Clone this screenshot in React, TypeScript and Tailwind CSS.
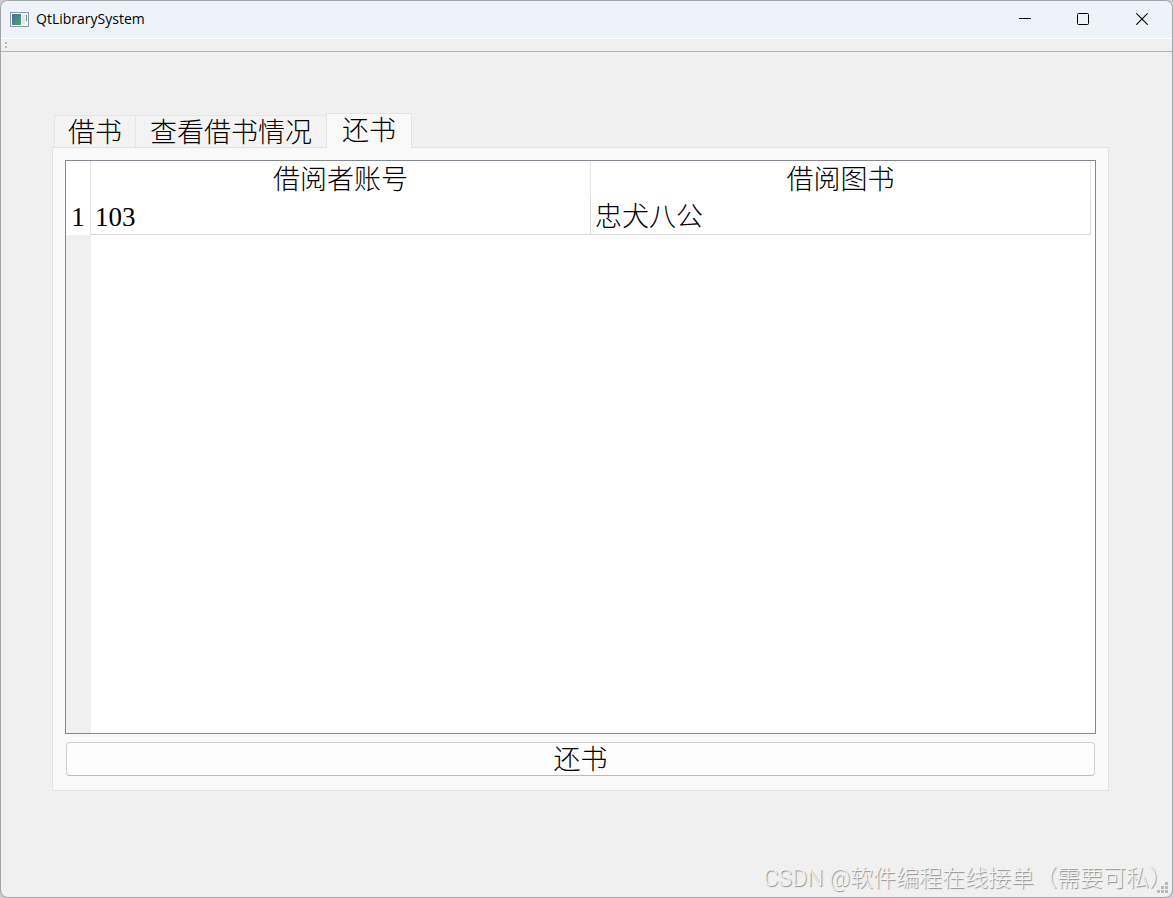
import * as React from "react";

interface Loan {
  account: string;
  book: string;
}

const TABS = ["借书", "查看借书情况", "还书"];

const LOANS: Loan[] = [{ account: "103", book: "忠犬八公" }];

function AppIcon() {
  return (
    <svg width="19" height="15" viewBox="0 0 19 15" aria-hidden="true">
      <defs>
        <linearGradient id="app-icon-fill" x1="0" y1="0" x2="1" y2="1">
          <stop offset="0" stopColor="#3f6f9c" />
          <stop offset="1" stopColor="#4fa573" />
        </linearGradient>
      </defs>
      <rect x="0.5" y="0.5" width="18" height="14" fill="#f3f5f7" stroke="#8f979f" />
      <rect x="2" y="2" width="9" height="11" fill="url(#app-icon-fill)" />
      <rect x="12" y="3" width="3" height="9" fill="#e3e6e8" />
      <rect x="16" y="3" width="1" height="6" fill="#4fa08c" />
    </svg>
  );
}

function TitleBar() {
  return (
    <header className="flex h-[38px] shrink-0 items-center justify-between border-b border-white bg-[#eef3f9] pb-px pl-[9px]">
      <div className="flex items-center gap-[7px]">
        <AppIcon />
        <h1 className="font-['Open_Sans','Noto_Sans',sans-serif] text-sm text-black">QtLibrarySystem</h1>
      </div>
      <div className="flex h-full">
        <button type="button" aria-label="Minimize" className="flex w-[58px] items-center justify-center">
          <svg width="12" height="12" viewBox="0 0 12 12" fill="none" stroke="#000">
            <path d="M0 5.5h12" />
          </svg>
        </button>
        <button type="button" aria-label="Maximize" className="flex w-[58px] items-center justify-center">
          <svg width="12" height="12" viewBox="0 0 12 12" fill="none" stroke="#000">
            <rect x="0.5" y="0.5" width="11" height="11" rx="1" />
          </svg>
        </button>
        <button type="button" aria-label="Close" className="flex w-[60px] items-center justify-center">
          <svg width="12" height="12" viewBox="0 0 12 12" fill="none" stroke="#000" strokeWidth="1.1">
            <path d="M0.3 0.3l11.4 11.4M11.7 0.3L0.3 11.7" />
          </svg>
        </button>
      </div>
    </header>
  );
}

function ToolBar() {
  return (
    <div role="toolbar" className="flex h-[13px] shrink-0 items-center border-b border-[#b4b4b4] pl-1">
      <svg width="3" height="7" viewBox="0 0 3 7" fill="#b8b8b8" aria-hidden="true">
        <rect width="2" height="2" />
        <rect y="4" width="2" height="2" />
      </svg>
    </div>
  );
}

function LoanTable({ loans }: { loans: Loan[] }) {
  return (
    <div className="flex min-h-0 flex-1 flex-col border border-[#828790] bg-white">
      <div className="pr-1">
        <table className="w-full table-fixed border-separate border-spacing-0">
          <thead>
            <tr className="h-[37px]">
              <th className="w-[25px] border-r border-[#e5e5e5] p-0" />
              <th scope="col" className="border-r border-[#e5e5e5] p-0 pt-px font-light">
                借阅者账号
              </th>
              <th scope="col" className="border-r border-[#e5e5e5] p-0 pt-px font-light">
                借阅图书
              </th>
            </tr>
          </thead>
          <tbody>
            {loans.map((loan, i) => (
              <tr key={i} className="h-[37px]">
                <th scope="row" className="border-r border-[#e5e5e5] p-0 font-light">
                  {i + 1}
                </th>
                <td className="border-r border-b border-[#d8d8d8] pt-[2px] pr-0 pb-0 pl-1">{loan.account}</td>
                <td className="border-r border-b border-[#d8d8d8] pt-[2px] pr-0 pb-0 pl-1">{loan.book}</td>
              </tr>
            ))}
          </tbody>
        </table>
      </div>
      <div className="w-[25px] flex-1 bg-[#f0f0f0]" />
    </div>
  );
}

function SizeGrip() {
  return (
    <svg width="11" height="11" viewBox="0 0 11 11" fill="#b9b9b9" aria-hidden="true">
      <rect x="8" y="0" width="3" height="3" />
      <rect x="4" y="4" width="3" height="3" />
      <rect x="8" y="4" width="3" height="3" />
      <rect x="0" y="8" width="3" height="3" />
      <rect x="4" y="8" width="3" height="3" />
      <rect x="8" y="8" width="3" height="3" />
    </svg>
  );
}

export default function App() {
  const [active, setActive] = React.useState(2);

  return (
    <div className="h-screen bg-[#c9cdd3]">
      <div className="relative flex h-full flex-col overflow-hidden rounded-lg border border-[#a0a3a8] bg-[#f0f0f0]">
        <TitleBar />
        <ToolBar />

        <main className="flex min-h-0 flex-1 flex-col pt-[61px] pr-[63px] pb-[106px] pl-[51px] font-['Liberation_Serif','Noto_Sans_CJK_SC',serif] text-[27px] leading-8 font-light text-black">
          <div role="tablist" className="flex items-end pl-[2px]">
            {TABS.map((tab, i) => (
              <button
                key={tab}
                type="button"
                role="tab"
                aria-selected={i === active}
                onClick={() => setActive(i)}
                className={
                  i === active
                    ? "relative z-10 -mb-px h-[35px] border border-b-0 border-[#e3e3e3] bg-[#f9f9f9] px-[15px]"
                    : "h-8 border border-r-0 border-b-0 border-[#e5e5e5] bg-[#f3f3f3] pt-px pr-[13px] pl-[13px] nth-2:px-[14px]"
                }
              >
                {tab}
              </button>
            ))}
          </div>

          <section
            role="tabpanel"
            aria-label={TABS[active]}
            className="flex min-h-0 flex-1 flex-col gap-2 border border-[#e3e3e3] bg-[#f9f9f9] px-3 pt-3 pb-[14px]"
          >
            <LoanTable loans={LOANS} />
            <button
              type="button"
              className="mx-px h-[34px] shrink-0 rounded border border-[#d0d0d0] border-b-[#bababa] bg-[#fdfdfd] pt-px"
            >
              还书
            </button>
          </section>
        </main>

        <footer className="pointer-events-none absolute right-0 bottom-1 flex items-end">
          <span className="font-['Roboto','Noto_Sans_CJK_SC',sans-serif] text-[23px] leading-7 font-light text-[#f3f3f3] [text-shadow:1px_1px_1px_#8c8c8c]">
            CSDN @软件编程在线接单（需要可私）
          </span>
          <span className="absolute right-1 bottom-0">
            <SizeGrip />
          </span>
        </footer>
      </div>
    </div>
  );
}
